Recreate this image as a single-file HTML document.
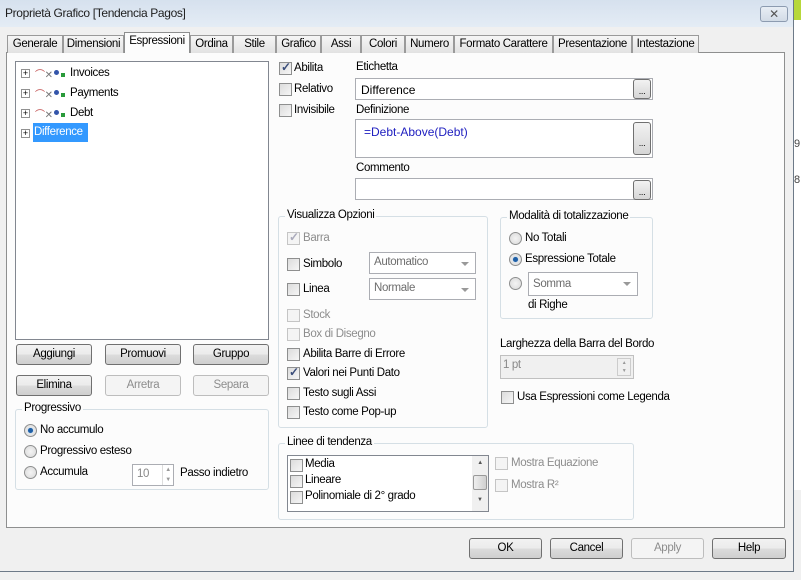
<!DOCTYPE html>
<html><head><meta charset="utf-8"><style>
*{box-sizing:border-box;margin:0;padding:0}
body{width:801px;height:580px;overflow:hidden;background:#f0f0f0;font-family:"Liberation Sans",sans-serif;font-size:11.5px;letter-spacing:-0.35px;color:#000;position:relative}
.a{position:absolute;white-space:nowrap}
.dlg{position:absolute;left:0;top:0;width:794px;height:572px;background:#f0f0f0;border:1px solid #6d7a88;border-top:none;border-left:none}
.title{position:absolute;left:0;top:0;width:793px;height:27px;background:linear-gradient(#d6e1ee,#e4ecf5)}
.tab{position:absolute;top:35px;height:18px;border:1px solid #9a9a9a;border-bottom:none;background:linear-gradient(#f6f6f6,#e2e2e2);padding-top:2px;text-align:center;white-space:nowrap;overflow:hidden}
.panel{position:absolute;left:6px;top:52px;width:779px;height:476px;background:#fcfcfc;border:1px solid #8e8f8f}
.btn{position:absolute;height:21px;border:1px solid #707070;border-radius:3px;background:linear-gradient(#f2f2f2 0,#ebebeb 50%,#dcdcdc 51%,#cfcfcf);text-align:center;line-height:19px}
.btn.d{border-color:#bdbdbd;background:#f4f4f4;color:#8d8d8d}
.cb{position:absolute;width:13px;height:13px;border:1px solid #8e8f8f;background:linear-gradient(135deg,#dcdcdc,#f6f6f6)}
.cb.d{border-color:#c5c5c5;background:#f4f4f4}
.ck::after{content:"✓";position:absolute;left:1px;top:-3px;font-size:12px;color:#3a4d7a;font-weight:bold}
.ck.d::after{color:#aab}
.rb{position:absolute;width:13px;height:13px;border-radius:50%;border:1px solid #8e8f8f;background:radial-gradient(#f4f4f4,#d8d8d8)}
.rb.on::after{content:"";position:absolute;left:3px;top:3px;width:5px;height:5px;border-radius:50%;background:#1f5fa6;box-shadow:0 0 1px #5aa0e0}
.grp{position:absolute;border:1px solid #d5dfe5;border-radius:3px}
.gl{position:absolute;top:-8px;left:6px;background:#fcfcfc;padding:0 2px}
.inp{position:absolute;background:#fff;border:1px solid #abadb3}
.sel{position:absolute;border:1px solid #abadb3;background:#fff;color:#6d6d6d;padding:3px 0 0 4px}
.sel::after{content:"";position:absolute;right:6px;top:9px;border:4px solid transparent;border-top:4px solid #999;border-bottom:none}
.dots{position:absolute;width:18px;height:20px;border:1px solid #707070;border-radius:3px;background:linear-gradient(#f2f2f2,#d6d6d6);font-size:9px;text-align:center;line-height:22px}
.g{color:#8d8d8d}
.pm{position:absolute;width:9px;height:9px;border:1px solid #919191;background:#fff;font-size:9px;line-height:7px;text-align:center;letter-spacing:0}
</style></head><body>
<div class="dlg"></div>
<div class="title"></div>
<div class="a" style="left:5px;top:6px;font-size:12px;color:#1e1e1e">Proprietà Grafico [Tendencia Pagos]</div>
<div class="a" style="left:760px;top:6px;width:28px;height:16px;border:1px solid #8c9bb0;border-radius:3px;background:linear-gradient(#e8eef5,#d2dbe6);text-align:center;font-size:12px;line-height:14px;color:#555">✕</div>
<div class="a" style="left:794px;top:0;width:7px;height:20px;background:#b7d83a"></div>
<div class="a" style="left:794px;top:20px;width:7px;height:470px;background:#fff"></div>
<div class="a" style="left:794px;top:138px;font-size:11px;color:#444">9</div>
<div class="a" style="left:794px;top:174px;font-size:11px;color:#444">8</div>

<div class="panel"></div>
<div class="tab" style="left:7px;width:56px">Generale</div>
<div class="tab" style="left:63px;width:61px">Dimensioni</div>
<div class="tab" style="left:190px;width:43px">Ordina</div>
<div class="tab" style="left:233px;width:43px">Stile</div>
<div class="tab" style="left:276px;width:45px">Grafico</div>
<div class="tab" style="left:321px;width:40px">Assi</div>
<div class="tab" style="left:361px;width:44px">Colori</div>
<div class="tab" style="left:405px;width:49px">Numero</div>
<div class="tab" style="left:454px;width:99px">Formato Carattere</div>
<div class="tab" style="left:553px;width:79px">Presentazione</div>
<div class="tab" style="left:632px;width:67px">Intestazione</div>
<div class="tab" style="left:124px;top:32px;width:66px;height:21px;background:#fcfcfc;border-color:#8e8f8f">Espressioni</div>

<!-- tree -->
<div class="inp" style="left:15px;top:61px;width:254px;height:279px;border-color:#828790"></div>
<div class="pm" style="left:21px;top:69px">+</div>
<div class="pm" style="left:21px;top:89px">+</div>
<div class="pm" style="left:21px;top:109px">+</div>
<div class="pm" style="left:21px;top:129px">+</div>
<div class="a" style="left:35px;top:66px;font-size:10px;color:#c05050">⌒<span style="color:#777">✕</span></div>
<div class="a" style="left:35px;top:86px;font-size:10px;color:#c05050">⌒<span style="color:#777">✕</span></div>
<div class="a" style="left:35px;top:106px;font-size:10px;color:#c05050">⌒<span style="color:#777">✕</span></div>
<div class="a" style="left:54px;top:70px;width:5px;height:5px;border-radius:50%;background:#3355aa"></div>
<div class="a" style="left:61px;top:73px;width:4px;height:4px;background:#2a9a3a"></div>
<div class="a" style="left:54px;top:90px;width:5px;height:5px;border-radius:50%;background:#3355aa"></div>
<div class="a" style="left:61px;top:93px;width:4px;height:4px;background:#2a9a3a"></div>
<div class="a" style="left:54px;top:110px;width:5px;height:5px;border-radius:50%;background:#3355aa"></div>
<div class="a" style="left:61px;top:113px;width:4px;height:4px;background:#2a9a3a"></div>
<div class="a" style="left:70px;top:67px">Invoices</div>
<div class="a" style="left:70px;top:87px">Payments</div>
<div class="a" style="left:70px;top:107px">Debt</div>
<div class="a" style="left:33px;top:123px;width:55px;height:19px;background:#3399ff;color:#fff;padding:3px 0 0 1px">Difference</div>

<div class="btn" style="left:16px;top:344px;width:76px">Aggiungi</div>
<div class="btn" style="left:105px;top:344px;width:76px">Promuovi</div>
<div class="btn" style="left:193px;top:344px;width:76px">Gruppo</div>
<div class="btn" style="left:16px;top:375px;width:76px">Elimina</div>
<div class="btn d" style="left:105px;top:375px;width:76px">Arretra</div>
<div class="btn d" style="left:193px;top:375px;width:76px">Separa</div>

<div class="grp" style="left:15px;top:409px;width:254px;height:81px"><div class="gl">Progressivo</div></div>
<div class="rb on" style="left:24px;top:424px"></div><div class="a" style="left:40px;top:424px">No accumulo</div>
<div class="rb" style="left:24px;top:445px"></div><div class="a" style="left:40px;top:445px">Progressivo esteso</div>
<div class="rb" style="left:24px;top:466px"></div><div class="a" style="left:40px;top:466px">Accumula</div>
<div class="inp" style="left:132px;top:464px;width:42px;height:22px;color:#888;padding:3px 4px">10</div>
<div class="a" style="left:162px;top:465px;width:11px;height:20px;border-left:1px solid #ddd;font-size:6px;color:#999;text-align:center;line-height:10px">▲<br>▼</div>
<div class="a" style="left:180px;top:467px">Passo indietro</div>

<!-- right top -->
<div class="cb ck" style="left:279px;top:62px"></div><div class="a" style="left:294px;top:62px">Abilita</div>
<div class="cb" style="left:279px;top:83px"></div><div class="a" style="left:294px;top:83px">Relativo</div>
<div class="cb" style="left:279px;top:104px"></div><div class="a" style="left:294px;top:104px">Invisibile</div>
<div class="a" style="left:356px;top:61px">Etichetta</div>
<div class="inp" style="left:355px;top:78px;width:298px;height:22px;padding:4px 5px;font-size:12px;letter-spacing:0">Difference</div>
<div class="dots" style="left:633px;top:79px">...</div>
<div class="a" style="left:356px;top:104px">Definizione</div>
<div class="inp" style="left:355px;top:119px;width:298px;height:39px;padding:5px 8px;color:#2020c0;font-size:12px;letter-spacing:0">=Debt-Above(Debt)</div>
<div class="dots" style="left:633px;top:122px;height:33px;line-height:40px">...</div>
<div class="a" style="left:356px;top:162px">Commento</div>
<div class="inp" style="left:355px;top:178px;width:298px;height:22px"></div>
<div class="dots" style="left:633px;top:180px">...</div>

<!-- Visualizza -->
<div class="grp" style="left:278px;top:216px;width:210px;height:212px"><div class="gl">Visualizza Opzioni</div></div>
<div class="cb d ck" style="left:287px;top:232px"></div><div class="a g" style="left:303px;top:232px">Barra</div>
<div class="cb" style="left:287px;top:258px"></div><div class="a" style="left:303px;top:258px">Simbolo</div>
<div class="sel" style="left:369px;top:252px;width:107px;height:22px">Automatico</div>
<div class="cb" style="left:287px;top:283px"></div><div class="a" style="left:303px;top:283px">Linea</div>
<div class="sel" style="left:369px;top:278px;width:107px;height:22px">Normale</div>
<div class="cb d" style="left:287px;top:309px"></div><div class="a g" style="left:303px;top:309px">Stock</div>
<div class="cb d" style="left:287px;top:328px"></div><div class="a g" style="left:303px;top:328px">Box di Disegno</div>
<div class="cb" style="left:287px;top:348px"></div><div class="a" style="left:303px;top:348px">Abilita Barre di Errore</div>
<div class="cb ck" style="left:287px;top:367px"></div><div class="a" style="left:303px;top:367px">Valori nei Punti Dato</div>
<div class="cb" style="left:287px;top:387px"></div><div class="a" style="left:303px;top:387px">Testo sugli Assi</div>
<div class="cb" style="left:287px;top:406px"></div><div class="a" style="left:303px;top:406px">Testo come Pop-up</div>

<!-- Modalita -->
<div class="grp" style="left:500px;top:217px;width:153px;height:102px"><div class="gl">Modalità di totalizzazione</div></div>
<div class="rb" style="left:509px;top:232px"></div><div class="a" style="left:525px;top:232px">No Totali</div>
<div class="rb on" style="left:509px;top:253px"></div><div class="a" style="left:525px;top:253px">Espressione Totale</div>
<div class="rb" style="left:509px;top:277px"></div>
<div class="sel" style="left:528px;top:272px;width:110px;height:24px;padding-top:5px">Somma</div>
<div class="a" style="left:528px;top:299px">di Righe</div>

<div class="a" style="left:500px;top:338px">Larghezza della Barra del Bordo</div>
<div class="inp" style="left:500px;top:355px;width:134px;height:24px;background:#f0f0f0;border-color:#c0c0c0;color:#888;padding:3px 2px">1 pt</div>
<div class="a" style="left:617px;top:358px;width:14px;height:18px;border:1px solid #ccc;font-size:5px;color:#999;text-align:center;line-height:8px">▲<br>▼</div>
<div class="cb" style="left:501px;top:391px"></div><div class="a" style="left:517px;top:391px">Usa Espressioni come Legenda</div>

<!-- Linee -->
<div class="grp" style="left:278px;top:443px;width:356px;height:77px"><div class="gl">Linee di tendenza</div></div>
<div class="inp" style="left:287px;top:455px;width:202px;height:57px;border-color:#828790;overflow:hidden"></div>
<div class="a" style="left:472px;top:456px;width:16px;height:55px;background:#f0f0f0;font-size:6px;color:#555;text-align:center;padding-top:4px">▲</div>
<div class="a" style="left:473px;top:475px;width:14px;height:15px;border:1px solid #999;border-radius:2px;background:linear-gradient(90deg,#eee,#d0d0d0)"></div>
<div class="a" style="left:477px;top:497px;font-size:6px;color:#555">▼</div>
<div class="cb" style="left:290px;top:459px"></div><div class="a" style="left:305px;top:458px">Media</div>
<div class="cb" style="left:290px;top:475px"></div><div class="a" style="left:305px;top:474px">Lineare</div>
<div class="cb" style="left:290px;top:491px"></div><div class="a" style="left:305px;top:490px">Polinomiale di 2° grado</div>
<div class="cb d" style="left:495px;top:457px"></div><div class="a g" style="left:511px;top:457px">Mostra Equazione</div>
<div class="cb d" style="left:495px;top:479px"></div><div class="a g" style="left:511px;top:479px">Mostra R²</div>

<!-- bottom -->
<div class="btn" style="left:469px;top:538px;width:73px">OK</div>
<div class="btn" style="left:550px;top:538px;width:73px">Cancel</div>
<div class="btn d" style="left:631px;top:538px;width:73px">Apply</div>
<div class="btn" style="left:712px;top:538px;width:74px">Help</div>
</body></html>
